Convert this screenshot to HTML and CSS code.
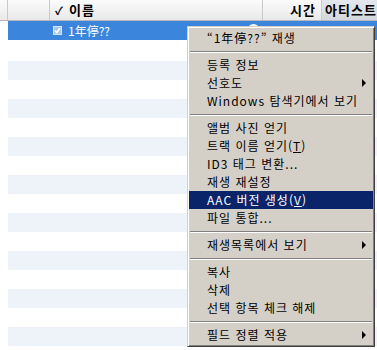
FILE: index.html
```html
<!DOCTYPE html>
<html lang="ko">
<head>
    <meta charset="UTF-8">
    <title>iTunes 목록</title>
    <link rel="stylesheet" href="styles.css">
</head>
<body>
    <div class="list">
        <div class="head">
            <div class="hc c0"></div>
            <div class="hc c1"></div>
            <div class="hc c2"><span class="tick">✓</span>이름</div>
            <div class="hc c3">시간</div>
            <div class="hc c4">아티스트</div>
        </div>
        <div class="row sel">
            <div class="cell c1"></div>
            <div class="cell c2">
                <svg class="chk" width="9" height="9" viewBox="0 0 9 9">
                    <rect x="0.5" y="0.5" width="8" height="8" fill="#a8c6ee" stroke="#d6e4f8"/>
                    <path d="M2 4.5 L3.8 6.5 L7 2.2" fill="none" stroke="#fff" stroke-width="1.6"/>
                </svg>
                <span class="name">1年停??</span>
                <span class="go"></span>
            </div>
            <div class="cell c3">1:55</div>
            <div class="cell c4">??</div>
        </div>
        <div class="row"></div>
        <div class="row alt"></div>
        <div class="row"></div>
        <div class="row alt"></div>
        <div class="row"></div>
        <div class="row alt"></div>
        <div class="row"></div>
        <div class="row alt"></div>
        <div class="row"></div>
        <div class="row alt"></div>
        <div class="row"></div>
        <div class="row alt"></div>
        <div class="row"></div>
        <div class="row alt"></div>
        <div class="row"></div>
        <div class="row alt"></div>
        <div class="row"></div>
    </div>

    <div class="menu">
        <div class="item">“1年停??” 재생</div>
        <div class="sep"></div>
        <div class="item">등록 정보</div>
        <div class="item sub">선호도</div>
        <div class="item">Windows 탐색기에서 보기</div>
        <div class="sep"></div>
        <div class="item">앨범 사진 얻기</div>
        <div class="item">트랙 이름 얻기(<u>T</u>)</div>
        <div class="item">ID3 태그 변환...</div>
        <div class="item">재생 재설정</div>
        <div class="item hot">AAC 버전 생성(<u>V</u>)</div>
        <div class="item">파일 통합...</div>
        <div class="sep"></div>
        <div class="item sub">재생목록에서 보기</div>
        <div class="sep"></div>
        <div class="item">복사</div>
        <div class="item">삭제</div>
        <div class="item">선택 항목 체크 해제</div>
        <div class="sep"></div>
        <div class="item sub">필드 정렬 적용</div>
    </div>
</body>
</html>
```

FILE: styles.css
```css
body {
    margin: 0;
    background: #fff;
    font-family: "Noto Sans CJK KR", "Liberation Sans", sans-serif;
    font-size: 12px;
    overflow: hidden;
}
.list {
    width: 377px;
}
.head {
    display: flex;
    height: 20px;
    border-bottom: 1px solid #b9b9b9;
    background: linear-gradient(#fbfbfb, #e9e9e9);
    font-weight: bold;
    font-size: 13px;
    letter-spacing: 1px;
    line-height: 20px;
}
.hc {
    box-sizing: border-box;
    border-right: 1px solid #c9c9c9;
    white-space: nowrap;
    overflow: hidden;
}
.c0 { width: 8px; }
.c1 { width: 42px; }
.c2 { width: 213px; }
.c3 { width: 59px; }
.c4 { flex: 1; }
.head .c3 {
    text-align: right;
    padding-right: 5px;
}
.head .c4 {
    padding-left: 3px;
    border-right: none;
    background: linear-gradient(#e4e8ee, #d3d8df);
}
.tick {
    display: inline-block;
    margin: 0 5px 0 5px;
    font-size: 11px;
}
.row {
    display: flex;
    height: 19px;
    margin-left: 8px;
}
.row.alt {
    background: #eef3fa;
}
.row.sel {
    background: #3b86dc;
    color: #fff;
    margin-bottom: 2px;
    line-height: 19px;
}
.row .c1 { width: 42px; }
.row .c3 {
    text-align: right;
    padding-right: 6px;
    box-sizing: border-box;
}
.row .c4 { padding-left: 4px; }
.cell.c2 {
    display: flex;
    align-items: center;
}
.chk {
    margin: 0 6px 0 3px;
}
.go {
    margin-left: auto;
    margin-right: 3px;
    width: 13px;
    height: 13px;
    border-radius: 50%;
    background: #f4f8fd;
}
.menu {
    position: absolute;
    left: 187px;
    top: 26px;
    width: 188px;
    box-sizing: border-box;
    padding: 2px 1px;
    background: #d4d0c8;
    border: 1px solid;
    border-color: #d4d0c8 #404040 #404040 #d4d0c8;
    box-shadow: inset 1px 1px #fff, inset -1px -1px #808080;
    color: #000;
    letter-spacing: 1px;
}
.item {
    position: relative;
    height: 18px;
    line-height: 17px;
    padding-left: 18px;
    white-space: nowrap;
}
.item u {
    text-decoration-thickness: 1px;
    text-underline-offset: 1px;
}
.item.hot {
    background: #0a246a;
    color: #fff;
}
.item.sub::after {
    content: "";
    position: absolute;
    right: 7px;
    top: 5px;
    border-left: 4px solid #000;
    border-top: 4px solid transparent;
    border-bottom: 4px solid transparent;
}
.sep {
    height: 9px;
    margin: 0 1px;
    box-sizing: border-box;
    padding-top: 4px;
}
.sep::before {
    content: "";
    display: block;
    border-top: 1px solid #808080;
    border-bottom: 1px solid #fff;
}
```
